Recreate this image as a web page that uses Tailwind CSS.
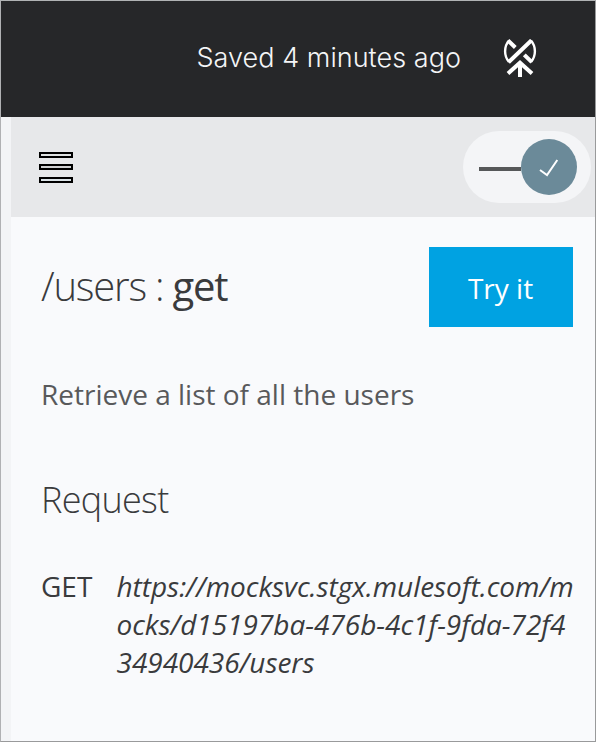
<!DOCTYPE html>
<html lang="en">
<head>
<meta charset="utf-8">
<title>API console</title>
<script src="https://cdn.jsdelivr.net/npm/@tailwindcss/browser@4"></script>
</head>
<body class="h-[742px] w-[596px] overflow-hidden font-['Open_Sans',sans-serif] text-[28px] text-[#3a3b3d]">
<div class="flex h-full w-full flex-col border border-t-[#b0b3b4] border-r-[#999a9b] border-b-[#999a9b] border-l-[#b0b1b3] bg-[#f9fafc]">
  <header class="flex h-[116px] shrink-0 items-center justify-end bg-[#262729] pr-[58px]">
    <span class="mr-[42px] pb-[2px] font-['Inter',sans-serif] text-[27px] leading-10 font-light tracking-[0.04px] whitespace-nowrap text-[#f4f5f7]">Saved 4 minutes ago</span>
    <svg class="h-[40px] w-[34px]" viewBox="0 0 34 40" fill="none" stroke="#fff">
      <path stroke-width="2.4" d="M6 1.500C.8 7.500.8 17 6 23M28 1.500C33.200 7.500 33.200 17 28 23" />
      <path stroke-width="4" d="M5 1.500 12.300 8.500M5.500 23.200 28.500 1.300M28.800 23.200 21.300 15.800" />
      <path stroke-width="4" d="M17 38V24M5 34.500 17 23.700 29 34.500" />
    </svg>
  </header>
  <div class="flex min-h-0 flex-1">
    <div class="w-[10px] shrink-0 bg-[#f3f4f6]"></div>
    <main class="min-w-0 flex-1">
      <div class="flex h-[100px] items-center justify-between bg-[#e7e8ea] pr-1 pl-7">
        <div class="flex flex-col gap-[6.5px]">
          <i class="block h-[6px] w-[34px] border-2 border-black bg-[#dfe2e2]"></i>
          <i class="block h-[6px] w-[34px] border-2 border-black bg-[#d0d1d2]"></i>
          <i class="block h-[6px] w-[34px] border-2 border-black bg-[#dbe3e7]"></i>
        </div>
        <div class="flex h-[72px] w-32 items-center rounded-full bg-[#f4f5f7] pl-4">
          <div class="mt-1 h-1 w-[42px] bg-[#565859]"></div>
          <div class="grid size-14 place-items-center rounded-full bg-[#6b8a99]">
            <svg class="mt-[2px] h-[18px] w-[20px]" viewBox="0 0 20 18" fill="none" stroke="#fff" stroke-width="2"><path d="m1 11 7 5L18.3 1" /></svg>
          </div>
        </div>
      </div>
      <div class="pr-[22px] pl-[30px]">
        <div class="flex items-center justify-between pt-[30px]">
          <h1 class="pb-[2px] text-[40px] leading-10 font-light tracking-[-1.2px] whitespace-nowrap">/users : <span class="font-normal">get</span></h1>
          <button class="h-20 w-36 bg-[#00a2e2] pt-[2px] pr-[1px] text-white">Try it</button>
        </div>
        <p class="mt-[48px] leading-[38px] whitespace-nowrap text-[#58595b]">Retrieve a list of all the users</p>
        <h2 class="mt-[67px] text-[36px] leading-10 font-light tracking-[-0.7px]">Request</h2>
        <div class="mt-[47px] flex leading-[38px]">
          <span class="w-[75.5px] shrink-0">GET</span>
          <span class="tracking-[-0.04px] whitespace-nowrap italic">https://mocksvc.stgx.mulesoft.com/m<br>ocks/d15197ba-476b-4c1f-9fda-72f4<br>34940436/users</span>
        </div>
      </div>
    </main>
  </div>
</div>
</body>
</html>
